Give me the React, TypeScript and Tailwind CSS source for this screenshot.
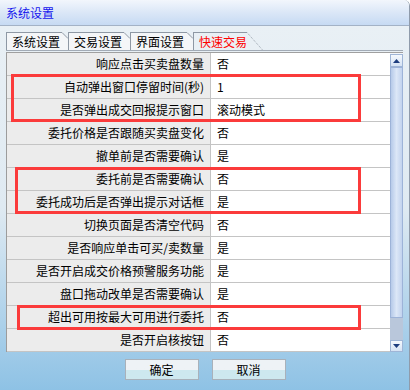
const rows: [string, string][] = [
  ['响应点击买卖盘数量', '否'],
  ['自动弹出窗口停留时间(秒)', '1'],
  ['是否弹出成交回报提示窗口', '滚动模式'],
  ['委托价格是否跟随买卖盘变化', '否'],
  ['撤单前是否需要确认', '是'],
  ['委托前是否需要确认', '否'],
  ['委托成功后是否弹出提示对话框', '是'],
  ['切换页面是否清空代码', '否'],
  ['是否响应单击可买/卖数量', '是'],
  ['是否开启成交价格预警服务功能', '是'],
  ['盘口拖动改单是否需要确认', '是'],
  ['超出可用按最大可用进行委托', '否'],
  ['是否开启核按钮', '否'],
]

function Tab({ label, w }: { label: string; w: string }) {
  return (
    <div className="flex h-[18px] items-stretch">
      <div className={`flex items-center border-l border-t border-[#8e98a4] bg-[#f4f6f8] pl-[5px] text-black ${w}`}>{label}</div>
      <svg width="6" height="18" className="block">
        <polygon points="0,0 6,6 6,18 0,18" fill="#f4f6f8" />
        <line x1="0" y1="0.5" x2="6" y2="6.5" stroke="#8e98a4" strokeWidth="1" />
      </svg>
    </div>
  )
}

export default function App() {
  return (
    <div className="relative flex h-[390px] w-[410px] flex-col overflow-hidden rounded-tr-[6px] border-r border-[#8f9bab] text-[12px] leading-none"
      style={{ fontFamily: '"Noto Sans CJK SC", "Liberation Sans", sans-serif' }}>
      {/* title bar */}
      <div className="flex h-[26px] shrink-0 items-center border-b border-[#a3b2c6] bg-gradient-to-b from-[#f2f6fc] via-[#dbe7f7] to-[#c6daf3] pl-[6px] text-[#1515ee]">
        系统设置
      </div>

      <div className="flex flex-1 flex-col bg-gradient-to-b from-[#e9f0f5] via-[#dfeaf2] to-[#8ec2e5] pl-[6px] pr-[6px] pt-[6px]">
        {/* tabs */}
        <div className="flex h-[19px] shrink-0 border-b border-[#a2abb6]">
          <Tab label="系统设置" w="w-[56px]" />
          <Tab label="交易设置" w="w-[56px]" />
          <Tab label="界面设置" w="w-[57px]" />
          <div className="flex h-[18px] items-stretch">
            <div className="flex w-[54px] items-center border-l border-t border-[#8e98a4] bg-[#e9f0f5] pl-[5px] text-[#ff0000]">快速交易</div>
            <svg width="16" height="18" className="block">
              <polygon points="0,0 16,18 0,18" fill="#e9f0f5" />
              <line x1="0" y1="0.5" x2="16" y2="18.5" stroke="#9aa3ad" strokeWidth="1" strokeDasharray="1 1" />
            </svg>
          </div>
        </div>

        {/* grid + scrollbar */}
        <div className="mt-[1px] flex h-[300px] shrink-0 border-t border-[#a0a0a0]">
          <div className="flex flex-1 flex-col border-l border-[#9c9c9c] bg-white">
            {rows.map(([k, v]) => (
              <div key={k} className="flex h-[23px] shrink-0 border-b border-[#c4c4c4]">
                <div className="flex w-[204px] items-center justify-end border-r border-[#c4c4c4] bg-[#ececec] pr-[6px] text-black">{k}</div>
                <div className="flex flex-1 items-center pl-[6px] text-black">{v}</div>
              </div>
            ))}
          </div>
          <div className="flex w-[13px] flex-col bg-[#f3f6fa] pt-[1px]">
            <div className="flex h-[13px] items-center justify-center border border-[#9fb5d6] bg-gradient-to-b from-[#f4f8fd] to-[#d6e3f4]">
              <svg width="7" height="4"><polygon points="3.5,0 7,4 0,4" fill="#1d3d7e" /></svg>
            </div>
            <div className="h-[251px] border border-[#9db3d8] bg-gradient-to-r from-[#b6cae9] via-[#dce7f7] to-[#c2d3ee]" />
            <div className="flex-1 bg-[#b9c7db]" />
            <div className="flex h-[12px] items-center justify-center border border-[#9fb5d6] bg-gradient-to-b from-[#f4f8fd] to-[#d6e3f4]">
              <svg width="7" height="4"><polygon points="0,0 7,0 3.5,4" fill="#1d3d7e" /></svg>
            </div>
          </div>
        </div>

        {/* buttons */}
        <div className="flex flex-1 items-start justify-center gap-[13px] pl-[1px] pt-[7px]">
          {['确定', '取消'].map(b => (
            <button key={b} className="flex h-[21px] w-[74px] items-center justify-center border border-[#a9b1ba] bg-gradient-to-b from-[#eef2f6] from-50% to-[#cde8ef] to-50% text-[12px] text-black">
              {b}
            </button>
          ))}
        </div>
      </div>

      {/* red annotation boxes */}
      <div className="absolute left-[11px] top-[74px] h-[48px] w-[350px] border-[3px] border-[#fb3b3b]" />
      <div className="absolute left-[15px] top-[167px] h-[47px] w-[346px] border-[3px] border-[#fb3b3b]" />
      <div className="absolute left-[17px] top-[305px] h-[25px] w-[344px] border-[3px] border-[#fb3b3b]" />
    </div>
  )
}
